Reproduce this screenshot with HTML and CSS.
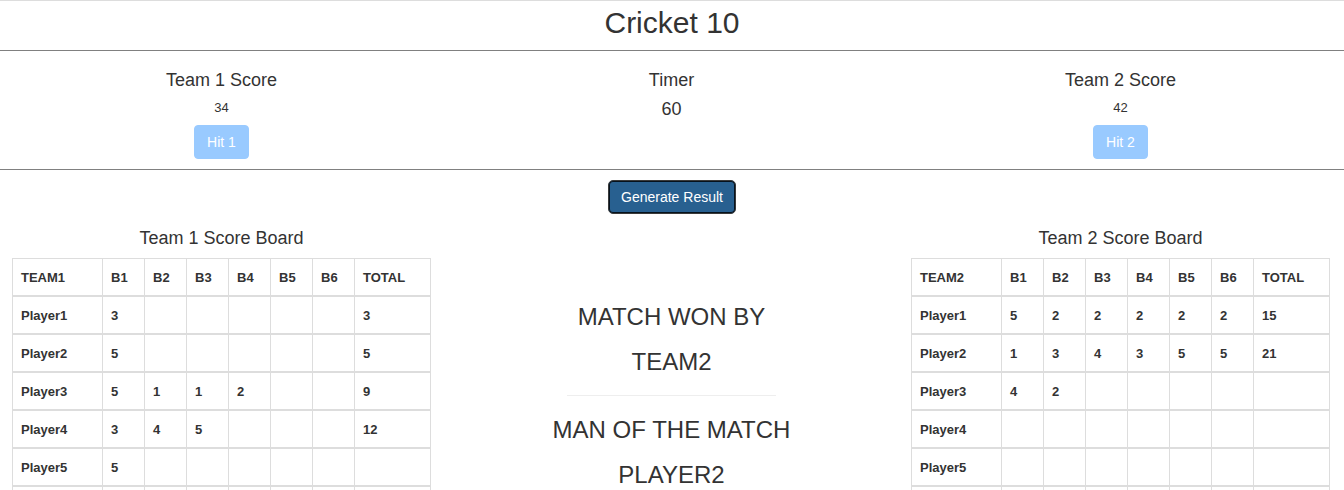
FILE: index.html
```html
<!DOCTYPE html>
<html>
<head>
<meta charset="utf-8">
<title>Cricket 10</title>
<link rel="stylesheet" href="styles.css">
</head>
<body>
<header class="top">
  <h1 class="title">Cricket 10</h1>
</header>

<section class="scores grid3">
  <div class="score-col">
    <div class="label">Team 1 Score</div>
    <div class="score">34</div>
    <button class="hit">Hit 1</button>
  </div>
  <div class="score-col mid">
    <div class="label">Timer</div>
    <div class="timer">60</div>
  </div>
  <div class="score-col">
    <div class="label">Team 2 Score</div>
    <div class="score">42</div>
    <button class="hit">Hit 2</button>
  </div>
</section>

<div class="gen-wrap">
  <button class="generate">Generate Result</button>
</div>

<section class="boards grid3">
  <div class="board">
    <div class="board-title">Team 1 Score Board</div>
    <table class="sb">
      <colgroup><col class="c-name"><col class="c-b"><col class="c-b"><col class="c-b"><col class="c-b"><col class="c-b"><col class="c-b"><col class="c-tot"></colgroup>
      <tr><th>TEAM1</th><th>B1</th><th>B2</th><th>B3</th><th>B4</th><th>B5</th><th>B6</th><th>TOTAL</th></tr>
      <tr><td>Player1</td><td>3</td><td></td><td></td><td></td><td></td><td></td><td>3</td></tr>
      <tr><td>Player2</td><td>5</td><td></td><td></td><td></td><td></td><td></td><td>5</td></tr>
      <tr><td>Player3</td><td>5</td><td>1</td><td>1</td><td>2</td><td></td><td></td><td>9</td></tr>
      <tr><td>Player4</td><td>3</td><td>4</td><td>5</td><td></td><td></td><td></td><td>12</td></tr>
      <tr><td>Player5</td><td>5</td><td></td><td></td><td></td><td></td><td></td><td></td></tr>
      <tr><td>&nbsp;</td><td></td><td></td><td></td><td></td><td></td><td></td><td></td></tr>
    </table>
  </div>
  <div class="result mid">
    <div class="res-line">MATCH WON BY</div>
    <div class="res-line">TEAM2</div>
    <hr class="res-hr">
    <div class="res-line">MAN OF THE MATCH</div>
    <div class="res-line">PLAYER2</div>
  </div>
  <div class="board">
    <div class="board-title">Team 2 Score Board</div>
    <table class="sb">
      <colgroup><col class="c-name"><col class="c-b"><col class="c-b"><col class="c-b"><col class="c-b"><col class="c-b"><col class="c-b"><col class="c-tot"></colgroup>
      <tr><th>TEAM2</th><th>B1</th><th>B2</th><th>B3</th><th>B4</th><th>B5</th><th>B6</th><th>TOTAL</th></tr>
      <tr><td>Player1</td><td>5</td><td>2</td><td>2</td><td>2</td><td>2</td><td>2</td><td>15</td></tr>
      <tr><td>Player2</td><td>1</td><td>3</td><td>4</td><td>3</td><td>5</td><td>5</td><td>21</td></tr>
      <tr><td>Player3</td><td>4</td><td>2</td><td></td><td></td><td></td><td></td><td></td></tr>
      <tr><td>Player4</td><td></td><td></td><td></td><td></td><td></td><td></td><td></td></tr>
      <tr><td>Player5</td><td></td><td></td><td></td><td></td><td></td><td></td><td></td></tr>
      <tr><td>&nbsp;</td><td></td><td></td><td></td><td></td><td></td><td></td><td></td></tr>
    </table>
  </div>
</section>
</body>
</html>
```

FILE: styles.css
```css
* { box-sizing: border-box; }

html, body {
  margin: 0;
  padding: 0;
  background: #fff;
  color: #333;
  font-family: "Liberation Sans", Arial, Helvetica, sans-serif;
  font-size: 14px;
}

.top {
  border-top: 1px solid #ddd;
  border-bottom: 1px solid #808080;
  padding-bottom: 5px;
}

.title {
  margin: 0;
  font-size: 30px;
  font-weight: normal;
  line-height: 44px;
  text-align: center;
}

.grid3 {
  display: grid;
  grid-template-columns: 443px 456px 443px;
}

.mid {
  padding-left: 1px;
}

.scores {
  border-bottom: 1px solid #808080;
  padding: 19px 0 10px;
}

.score-col {
  display: flex;
  flex-direction: column;
  align-items: center;
}

.label {
  font-size: 18px;
  line-height: 20px;
}

.score {
  margin-top: 9px;
  font-size: 13px;
  line-height: 18px;
}

.timer {
  margin-top: 9px;
  font-size: 18px;
  line-height: 20px;
}

.hit {
  margin-top: 8px;
  height: 34px;
  padding: 6px 12px;
  border: 1px solid #99caff;
  border-radius: 4px;
  background: #99caff;
  color: #fff;
  font-family: inherit;
  font-size: 14px;
  line-height: 20px;
}

.gen-wrap {
  display: flex;
  justify-content: center;
  padding-top: 10px;
}

.generate {
  height: 34px;
  padding: 6px 12px;
  border: 1px solid #3a3a3a;
  border-radius: 5px;
  box-shadow: inset 0 0 0 1px #06121d;
  background: #286090;
  color: #fff;
  font-family: inherit;
  font-size: 14px;
  line-height: 20px;
}

.boards {
  padding-top: 14px;
}

.board {
  display: flex;
  flex-direction: column;
  align-items: center;
}

.board-title {
  font-size: 18px;
  line-height: 20px;
  margin-bottom: 10px;
}

.sb {
  width: 419px;
  table-layout: fixed;
  border-collapse: separate;
  border-spacing: 0;
  border-top: 1px solid #ddd;
  border-left: 1px solid #ddd;
}

.c-name { width: 90px; }
.c-b { width: 42px; }
.c-tot { width: 76px; }

.sb th,
.sb td {
  padding: 9px 8px 7px;
  border-right: 1px solid #ddd;
  border-bottom: 2px solid #ddd;
  font-size: 13px;
  font-weight: bold;
  line-height: 20px;
  text-align: left;
  white-space: nowrap;
}

.result {
  padding-top: 66px;
  display: flex;
  flex-direction: column;
  align-items: center;
}

.res-line {
  font-size: 24px;
  line-height: 45px;
}

.res-hr {
  width: 209px;
  margin: 11px 0 11px;
  border: 0;
  border-top: 1px solid #eee;
}
```
